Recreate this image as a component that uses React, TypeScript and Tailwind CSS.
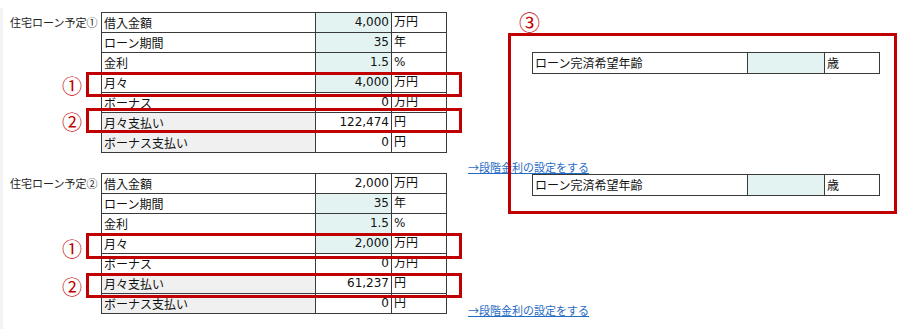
import React from "react";

type Row = { label: string; value: string; unit: string; cyan: boolean; gray: boolean };

const cellFont = "font-['DejaVu_Sans','Noto_Sans_CJK_JP',sans-serif]";
const cjk = "font-['Noto_Sans_CJK_JP',sans-serif]";

function makeRows(amount: string, pay: string, firstCyan: boolean): Row[] {
  return [
    { label: "借入金額", value: amount, unit: "万円", cyan: firstCyan, gray: false },
    { label: "ローン期間", value: "35", unit: "年", cyan: true, gray: false },
    { label: "金利", value: "1.5", unit: "%", cyan: true, gray: false },
    { label: "月々", value: amount, unit: "万円", cyan: true, gray: false },
    { label: "ボーナス", value: "0", unit: "万円", cyan: false, gray: false },
    { label: "月々支払い", value: pay, unit: "円", cyan: false, gray: true },
    { label: "ボーナス支払い", value: "0", unit: "円", cyan: false, gray: true },
  ];
}

function LoanTable({ rows }: { rows: Row[] }) {
  return (
    <div className={`grid grid-cols-[214px_76px_55px] border-l border-t border-[#3a3a3a] text-[12px] text-[#111] ${cellFont}`}>
      {rows.map((r, i) => (
        <React.Fragment key={i}>
          <div
            className={`h-[20px] border-r border-b border-[#3a3a3a] pl-[2px] leading-[19px] whitespace-nowrap ${cjk} ${
              r.gray ? "bg-[#f0f0f0]" : "bg-white"
            }`}
          >
            {r.label}
          </div>
          <div
            className={`h-[20px] border-r border-b border-[#3a3a3a] pr-[2px] text-right leading-[19px] ${
              r.cyan ? "bg-[#e3f3f2]" : "bg-white"
            }`}
          >
            {r.value}
          </div>
          <div className="h-[20px] border-r border-b border-[#3a3a3a] pl-[2px] leading-[19px] bg-white">
            {r.unit}
          </div>
        </React.Fragment>
      ))}
    </div>
  );
}

function RedBox({ top, height }: { top: number; height: number }) {
  return (
    <div
      className="absolute left-[-15px] w-[376px] border-[3px] border-[#c00000] pointer-events-none"
      style={{ top, height }}
    />
  );
}

function Circle({ top, children }: { top: number; children: React.ReactNode }) {
  return (
    <div
      className={`absolute left-[-39px] h-[20px] leading-[20px] text-[20px] text-[#c00000] ${cjk}`}
      style={{ top }}
    >
      {children}
    </div>
  );
}

function Block({
  label,
  rows,
  boxes,
  circles,
}: {
  label: string;
  rows: Row[];
  boxes: [number, number][];
  circles: [number, string][];
}) {
  return (
    <div className="flex">
      <div className={`w-[98px] pl-[7px] text-[11px] leading-[21px] text-[#222] whitespace-nowrap ${cjk}`}>
        {label}
      </div>
      <div className="relative">
        <LoanTable rows={rows} />
        {boxes.map(([t, h], i) => (
          <RedBox key={i} top={t} height={h} />
        ))}
        {circles.map(([t, c], i) => (
          <Circle key={i} top={t}>
            {c}
          </Circle>
        ))}
      </div>
    </div>
  );
}

function AgeTable() {
  return (
    <div className={`ml-[64px] grid grid-cols-[215px_77px_55px] border-l border-t border-[#3a3a3a] text-[12px] text-[#111] ${cjk}`}>
      <div className="h-[21px] border-r border-b border-[#3a3a3a] pl-[2px] leading-[20px] bg-white whitespace-nowrap">
        ローン完済希望年齢
      </div>
      <div className="h-[21px] border-r border-b border-[#3a3a3a] bg-[#e3f3f2]" />
      <div className="h-[21px] border-r border-b border-[#3a3a3a] pl-[2px] leading-[20px] bg-white">歳</div>
    </div>
  );
}

function StepLink({ className }: { className: string }) {
  return (
    <a
      href="#"
      className={`block w-fit text-[11px] leading-[13px] text-[#1f6bc6] underline underline-offset-[1px] whitespace-nowrap ${cjk} ${className}`}
    >
      →段階金利の設定をする
    </a>
  );
}

export default function App() {
  return (
    <div className="relative flex w-[921px] h-[329px] overflow-hidden bg-white">
      <div className="w-[3px] mt-[8px] bg-[#f3f3f3]" />
      <div className="flex flex-col pt-[12px] gap-[20px]">
        <Block
          label="住宅ローン予定①"
          rows={makeRows("4,000", "122,474", true)}
          boxes={[
            [60, 25],
            [96, 25],
          ]}
          circles={[
            [64, "①"],
            [100, "②"],
          ]}
        />
        <Block
          label="住宅ローン予定②"
          rows={makeRows("2,000", "61,237", false)}
          boxes={[
            [60, 26],
            [100, 25],
          ]}
          circles={[
            [66, "①"],
            [104, "②"],
          ]}
        />
      </div>
      <div className="flex flex-col ml-[21px]">
        <div className={`mt-[10px] pl-[51px] h-[22px] leading-[22px] text-[21px] text-[#c00000] ${cjk}`}>③</div>
        <div className="mt-[20px]">
          <AgeTable />
        </div>
        <StepLink className="mt-[87px]" />
        <AgeTable />
        <StepLink className="mt-[108px]" />
      </div>
      <div className="absolute left-[508px] top-[33px] w-[389px] h-[181px] border-[3px] border-[#c00000] pointer-events-none" />
    </div>
  );
}
